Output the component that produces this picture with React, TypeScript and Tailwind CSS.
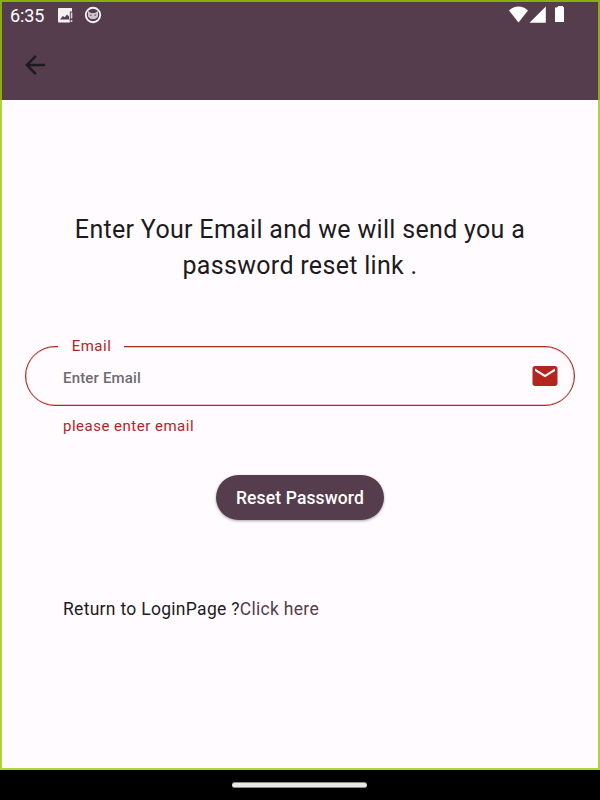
import React from "react";

function StatusBar() {
  return (
    <div className="flex h-[30px] items-start justify-between pl-[10px] pr-[35px] text-white">
      <div className="flex items-start">
        <span className="w-[47px] pt-[5px] text-[18px] leading-[22px] tracking-[-0.15px]">6:35</span>
        <svg className="mt-[7px]" width="17" height="17" viewBox="0 0 17 17">
          <path fill="#f3f1f2" d="M2 1h13v3.500h-2.200v7.500h-.8V9.500l-2-2-2.200 2.800L5.800 9 3 12.500h9.800V15.500H2A1 1 0 0 1 1 14.500V2A1 1 0 0 1 2 1z" />
          <path fill="#d9d3d7" d="M13.700 5.500h1.600v6h-1.600zM13.700 13h1.600v2h-1.600z" />
        </svg>
        <svg className="ml-[10px] mt-[6px]" width="18" height="18" viewBox="0 0 18 18">
          <circle cx="9" cy="9" r="7.200" fill="none" stroke="#f3f1f2" strokeWidth="1.900" />
          <path fill="#f3f1f2" opacity=".75" d="M4 5l3 2h4l3-2v5.500L12.500 12l-1.500 1H7l-1.500-1L4 10.500z" />
          <path fill="#563d4d" opacity=".6" d="M6 8.500h1.600V10H6zM10.400 8.500H12V10h-1.600z" />
        </svg>
      </div>
      <svg className="mt-[6px]" width="56" height="17" viewBox="0 0 56 17" fill="#fff">
        <path d="M0 4.500C5.500-.7 13.500-.7 19 4.500L9.500 16.400z" />
        <path d="M36.800.5v16.200H20.500z" />
        <path d="M48 1.500q0-.8 1-.8V0h5v.7q1 0 1 .8V16h-7z" />
        <path d="M46 1.500h9V16h-9z" />
      </svg>
    </div>
  );
}

function AppBar() {
  return (
    <div className="flex h-[70px] items-center pl-[20px]">
      <svg width="30" height="30" viewBox="0 0 24 24" fill="#1d1b1e">
        <path d="M20 11H7.830l5.590-5.590L12 4l-8 8 8 8 1.410-1.410L7.830 13H20v-2z" />
      </svg>
    </div>
  );
}

function EmailField() {
  return (
    <div className="mx-[25px]">
      <div className="relative flex h-[60px] items-center justify-between rounded-[30px] border border-[#b3261e] pl-[37px] pr-[14px] shadow-[inset_0_0_0_0.5px_rgba(179,38,30,0.5)]">
        <label className="absolute -top-[11px] left-[32px] w-[66px] bg-[#fffbff] pl-[1px] text-center text-[15px] leading-[20px] tracking-[0.5px] text-[#b3261e]">
          Email
        </label>
        <span className="pt-[3px] text-[15px] font-medium leading-[20px] tracking-[0.17px] text-[#6e6b6f]">Enter Email</span>
        <svg width="30" height="30" viewBox="0 0 24 24" fill="#b3261e">
          <path d="M20 4H4c-1.100 0-1.990.9-1.990 2L2 18c0 1.100.9 2 2 2h16c1.100 0 2-.9 2-2V6c0-1.100-.9-2-2-2zm0 4l-8 5-8-5V6l8 5 8-5v2z" />
        </svg>
      </div>
      <p className="ml-[38px] mt-[10px] text-[15px] leading-[20px] tracking-[0.5px] text-[#b3261e]">please enter email</p>
    </div>
  );
}

export default function App() {
  return (
    <div className="relative flex h-[800px] w-[600px] flex-col overflow-hidden bg-[#fffbff] font-['Roboto',sans-serif] text-[#1d1b1e]">
      <header className="h-[100px] bg-[#563d4d]">
        <StatusBar />
        <AppBar />
      </header>
      <main className="flex h-[670px] flex-col">
        <h1 className="mt-[112px] text-center text-[25px] leading-[36px] tracking-[0.3125px]">
          Enter Your Email and we will send you a
          <br />
          password reset link .
        </h1>
        <div className="mt-[62px]">
          <EmailField />
        </div>
        <button className="mt-[39px] h-[45px] w-[168px] self-center rounded-full bg-[#563d4d] pt-[2px] text-[17.5px] font-medium tracking-[0.125px] text-white shadow-[0_1px_3px_rgba(0,0,0,0.35)]">
          Reset Password
        </button>
        <p className="ml-[63px] mt-[77px] text-[17.5px] leading-[24px] tracking-[0.295px]">
          Return to LoginPage ?<a className="text-[#563d4d]">Click here</a>
        </p>
      </main>
      <footer className="flex h-[30px] justify-center bg-black pt-[12px] pr-[1px]">
        <div className="h-[6px] w-[135px] rounded-full border-y border-[#8a8a8a] bg-[#e8e8e8]" />
      </footer>
      <div className="pointer-events-none absolute inset-x-0 top-0 h-[100px] border-x-2 border-t-2 border-[#8bae08]" />
      <div className="pointer-events-none absolute inset-x-0 top-[100px] h-[670px] border-x-2 border-b-2 border-[#aed636]" />
    </div>
  );
}
